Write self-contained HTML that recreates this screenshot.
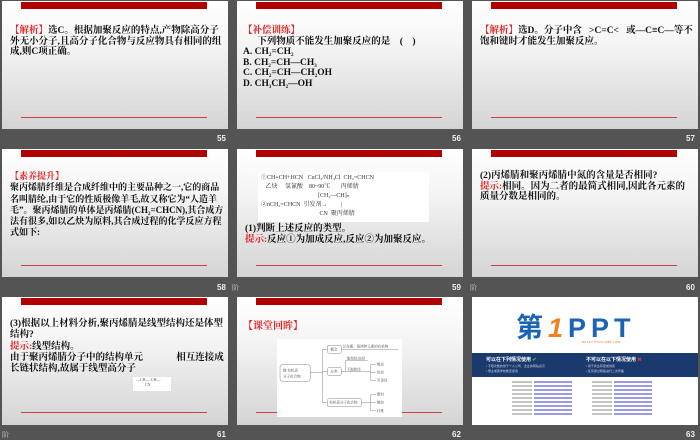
<!DOCTYPE html>
<html><head><meta charset="utf-8"><style>
*{margin:0;padding:0;box-sizing:border-box}
body{width:700px;height:438px;background:#545454;position:relative;overflow:hidden;font-family:"Liberation Serif","Noto Serif CJK SC","Noto Sans CJK SC",serif}
.s{position:absolute;width:226px;height:128px;background:linear-gradient(#fff 0%,#f4f4f4 35%,#d4d4d4 100%);overflow:hidden}
.bar{position:absolute;left:19px;top:1px;width:186px;height:7px;background:#b00000}
.ln{position:absolute;left:19px;top:116px;width:186px;height:1px;background:#d04040}
.t{position:absolute;left:8px;top:25px;width:214px;font-size:9.5px;line-height:10.5px;font-weight:bold;color:#111}
.r{color:#e02020}
sub{font-size:5px;vertical-align:0;position:relative;top:2px;line-height:0}
.n{position:absolute;font-family:"Liberation Sans",sans-serif;font-size:8px;font-weight:bold;color:#eee}
.k{position:absolute;font-size:7px;color:#ccc}
</style></head><body>

<div class="s" style="left:2px;top:1px"><div class="bar"></div><div class="ln"></div>
<div class="t"><span class="r">【解析】</span>选C。根据加聚反应的特点,产物除高分子外无小分子,且高分子化合物与反应物具有相同的组成,则C项正确。</div></div>
<div class="n" style="left:217px;top:134px">55</div>

<div class="s" style="left:237px;top:1px"><div class="bar"></div><div class="ln"></div>
<div class="t" style="left:6px"><span class="r">【补偿训练】</span><br>&nbsp;&nbsp;&nbsp;&nbsp;&nbsp;&nbsp;下列物质不能发生加聚反应的是&nbsp;&nbsp;&nbsp;&nbsp;(&nbsp;&nbsp;&nbsp;&nbsp;)<br>A. CH<sub>2</sub>=CH<sub>2</sub><br>B. CH<sub>2</sub>=CH—CH<sub>3</sub><br>C. CH<sub>2</sub>=CH—CH<sub>2</sub>OH<br>D. CH<sub>3</sub>CH<sub>2</sub>—OH</div></div>
<div class="n" style="left:452px;top:134px">56</div>

<div class="s" style="left:472px;top:1px"><div class="bar"></div><div class="ln"></div>
<div class="t" style="left:8px"><span class="r">【解析】</span>选D。分子中含&nbsp;&nbsp;&nbsp;&gt;C=C&lt;&nbsp;&nbsp;&nbsp;或—C≡C—等不饱和键时才能发生加聚反应。</div></div>
<div class="n" style="left:686px;top:134px">57</div>

<div class="s" style="left:2px;top:149px"><div class="bar"></div><div class="ln"></div>
<div class="t" style="top:22px;font-size:9px;line-height:11.3px;width:214px"><span class="r">【素养提升】</span><br>聚丙烯腈纤维是合成纤维中的主要品种之一,它的商品名叫腈纶,由于它的性质极像羊毛,故又称它为“人造羊毛”。聚丙烯腈的单体是丙烯腈(CH<sub>2</sub>=CHCN),其合成方法有很多,如以乙炔为原料,其合成过程的化学反应方程式如下:</div></div>
<div class="n" style="left:217px;top:283px">58</div>

<div class="s" style="left:237px;top:149px"><div class="bar"></div><div class="ln"></div>
<div style="position:absolute;left:21px;top:23px;width:171px;height:50px;background:#fff;font-size:6px;line-height:9px;color:#333;padding:2px 3px;white-space:pre">①CH≡CH+HCN   CuCl₂/NH₄Cl  CH₂=CHCN
   乙炔     氢氰酸    80~90℃       丙烯腈
                                      [CH₂—CH]ₙ
②nCH₂=CHCN  引发剂→         |
                                       CN  聚丙烯腈</div>
<div class="t" style="left:8px;top:75px">(1)判断上述反应的类型。<br><span class="r">提示:</span>反应①为加成反应,反应②为加聚反应。</div></div>
<div class="k" style="left:232px;top:283px">阶</div>
<div class="n" style="left:452px;top:283px">59</div>

<div class="s" style="left:472px;top:149px"><div class="bar"></div><div class="ln"></div>
<div class="t" style="left:8px;top:22px">(2)丙烯腈和聚丙烯腈中氮的含量是否相同?<br><span class="r">提示:</span>相同。因为二者的最简式相同,因此各元素的质量分数是相同的。</div></div>
<div class="k" style="left:470px;top:283px">阶</div>
<div class="n" style="left:686px;top:283px">60</div>

<div class="s" style="left:2px;top:297px"><div class="bar"></div><div class="ln" style="top:115px"></div>
<div class="t" style="top:22px;font-size:9.5px;line-height:11.3px;width:214px">(3)根据以上材料分析,聚丙烯腈是线型结构还是体型结构?<br><span class="r">提示:</span>线型结构。<br>由于聚丙烯腈分子中的结构单元&nbsp;&nbsp;&nbsp;&nbsp;&nbsp;&nbsp;&nbsp;&nbsp;&nbsp;&nbsp;&nbsp;&nbsp;&nbsp;&nbsp;相互连接成长链状结构,故属于线型高分子</div>
<div style="position:absolute;left:131px;top:80px;width:38px;height:14px;background:#fff;font-size:4px;color:#555;line-height:5px;padding-left:3px">—CH₂—CH—<br>&nbsp;&nbsp;&nbsp;&nbsp;&nbsp;&nbsp;&nbsp;&nbsp;&nbsp;CN</div></div>
<div class="k" style="left:2px;top:430px">阶</div>
<div class="n" style="left:217px;top:430px">61</div>

<div class="s" style="left:237px;top:297px"><div class="bar"></div><div class="ln" style="top:115px"></div>
<div class="t" style="top:25px;left:6px"><span class="r" style="font-size:10px">【课堂回眸】</span></div>
<div style="position:absolute;left:40px;top:42px;width:125px;height:78px;background:#fff">
<svg width="125" height="78" viewBox="0 0 124 77" font-size="3.5" fill="#444" stroke="#888" stroke-width=".5">
<rect x="3" y="25" width="30" height="17" rx="3" fill="none"/><text x="6" y="32" stroke="none">链 有机高</text><text x="6" y="38" stroke="none">分子化合物</text>
<path d="M33 33H45M45 10V63M45 10H50M45 32H50M45 63H50" fill="none"/>
<rect x="50" y="6" width="14" height="8" rx="2" fill="none"/><text x="53" y="11" stroke="none">概念</text>
<path d="M64 10H120" fill="none"/><text x="65" y="8" stroke="none">仅含碳、氢两种元素的有机物</text>
<rect x="50" y="28" width="14" height="8" rx="2" fill="none"/><text x="53" y="33" stroke="none">分类</text>
<path d="M64 32H68M68 21V32M68 21H90M68 32H90M89 32H93M93 25V41M93 25H98M93 33H98M93 41H98" fill="none"/>
<text x="69" y="20" stroke="none">饱和烃:烷烃</text><text x="69" y="31" stroke="none">不饱和烃</text>
<text x="99" y="26" stroke="none">烯烃</text><text x="99" y="34" stroke="none">炔烃</text><text x="99" y="42" stroke="none">芳香烃</text>
<rect x="50" y="59" width="34" height="8" rx="2" fill="none"/><text x="52" y="64" stroke="none">有机高分子化合物</text>
<path d="M84 63H93M93 55V71M93 55H98M93 63H98M93 71H98" fill="none"/>
<text x="99" y="56" stroke="none">塑料</text><text x="99" y="64" stroke="none">橡胶</text><text x="99" y="72" stroke="none">纤维</text>
</svg></div></div>
<div class="n" style="left:452px;top:430px">62</div>

<div class="s" style="left:472px;top:297px;background:#fff">
<div style="position:absolute;left:44px;top:16px;font-family:'Liberation Sans','Noto Sans CJK SC',sans-serif;font-size:27px;line-height:30px;font-weight:bold;color:#1d63b5;letter-spacing:5px">第<span style="color:#f08020;font-style:italic">1</span>PPT</div>
<div style="position:absolute;left:110px;top:43px;font-size:3.5px;color:#e08030">HTTP://WWW.1PPT.COM</div>
<div style="position:absolute;left:0;top:56px;width:226px;height:24px;background:#1a3a6e;color:#fff;font-family:'Liberation Sans','Noto Sans CJK SC',sans-serif">
<div style="position:absolute;left:14px;top:3px;font-size:5px;font-weight:bold">可以在下列情况使用 <span style="color:#4c4">✔</span></div>
<div style="position:absolute;left:114px;top:3px;font-size:5px;font-weight:bold">不可以在以下情况使用 <span style="color:#e33">✖</span></div>
<div style="position:absolute;left:14px;top:11px;font-size:3px;line-height:5px;color:#ccd">• 不限次数的用于个人公司、企业的网站演示<br>• 博主或者学校教室使用</div>
<div style="position:absolute;left:114px;top:11px;font-size:3px;line-height:5px;color:#ccd">• 用于商业转卖或倒卖<br>• 任何通过网络进行二次传播</div></div>
<div style="position:absolute;left:40px;top:83px;width:20px;height:37px;background:repeating-linear-gradient(#fff 0,#fff 1.5px,#888 1.5px,#888 2.5px,#fff 2.5px,#fff 4px)"></div>
<div style="position:absolute;left:62px;top:83px;width:38px;height:37px;background:repeating-linear-gradient(#fff 0,#fff 1.5px,#33c 1.5px,#33c 2.5px,#fff 2.5px,#fff 4px)"></div>
<div style="position:absolute;left:120px;top:83px;width:20px;height:37px;background:repeating-linear-gradient(#fff 0,#fff 1.5px,#888 1.5px,#888 2.5px,#fff 2.5px,#fff 4px)"></div>
<div style="position:absolute;left:142px;top:83px;width:38px;height:37px;background:repeating-linear-gradient(#fff 0,#fff 1.5px,#33c 1.5px,#33c 2.5px,#fff 2.5px,#fff 4px)"></div>
</div>
<div class="n" style="left:686px;top:430px">63</div>
</body></html>
